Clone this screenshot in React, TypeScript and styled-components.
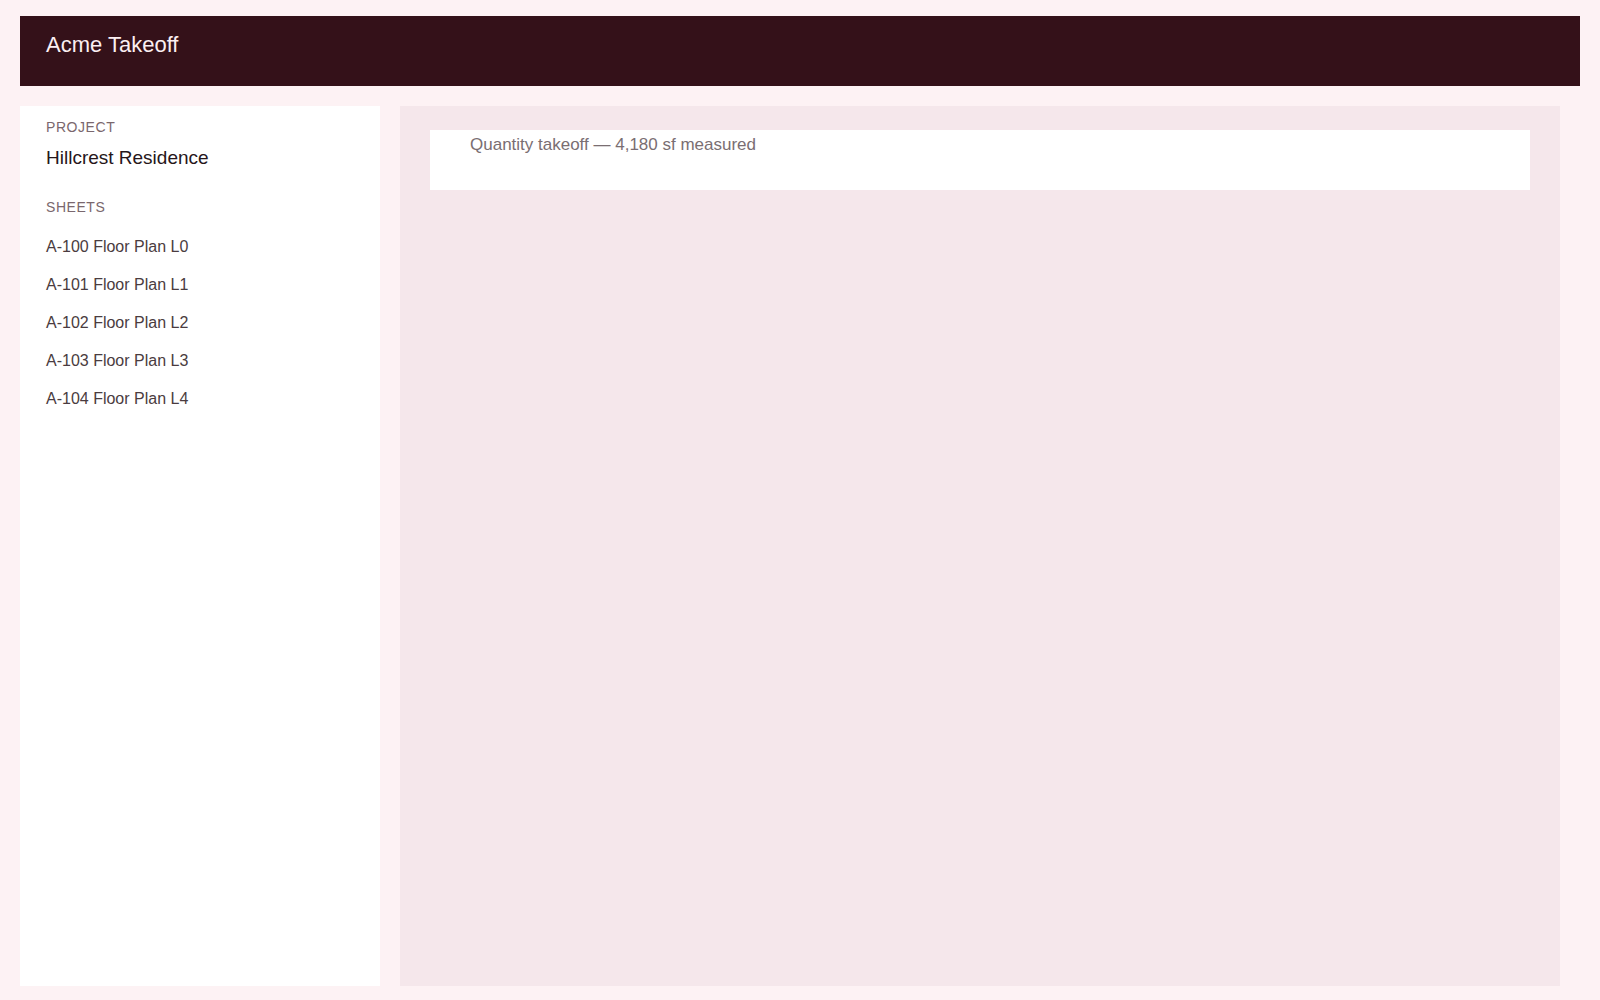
import React from "react";
import styled, { createGlobalStyle } from "styled-components";

const GlobalStyle = createGlobalStyle`
  html, body {
    margin: 0;
    padding: 0;
    background: #fdf2f4;
    font-family: "Liberation Sans", Arial, Helvetica, sans-serif;
  }
  * { box-sizing: border-box; }
`;

const Shell = styled.div`
  height: 1000px;
  padding: 16px 20px 14px 20px;
  display: flex;
  flex-direction: column;
  gap: 20px;
`;

const TopBar = styled.header`
  height: 70px;
  flex: none;
  background: #341119;
  padding: 17px 26px 0 26px;
  color: #fbeff2;
  font-size: 22px;
  line-height: 24px;
`;

const Body = styled.div`
  flex: 1;
  min-height: 0;
  display: flex;
  gap: 20px;
  padding-right: 20px;
`;

const Sidebar = styled.aside`
  width: 360px;
  flex: none;
  background: #ffffff;
  padding: 13px 26px;
  display: flex;
  flex-direction: column;
`;

const Label = styled.div<{ $gap?: number }>`
  font-size: 14px;
  line-height: 16px;
  letter-spacing: 0.04em;
  text-transform: uppercase;
  color: #7a676d;
  margin-top: ${(p) => p.$gap ?? 0}px;
`;

const ProjectName = styled.div`
  margin-top: 12px;
  font-size: 19px;
  line-height: 22px;
  color: #26161a;
`;

const SheetList = styled.ul`
  list-style: none;
  margin: 13px 0 0 0;
  padding: 0;
`;

const SheetItem = styled.li`
  padding: 9px 0;
  font-size: 16px;
  line-height: 20px;
  color: #4a3c40;
`;

const Main = styled.main`
  flex: 1;
  background: #f5e7eb;
  padding: 24px 30px;
`;

const SummaryCard = styled.div`
  height: 60px;
  background: #ffffff;
  padding: 5px 40px 0 40px;
  font-size: 17px;
  line-height: 20px;
  color: #7a6e72;
`;

const sheets = [
  "A-100 Floor Plan L0",
  "A-101 Floor Plan L1",
  "A-102 Floor Plan L2",
  "A-103 Floor Plan L3",
  "A-104 Floor Plan L4",
];

export default function App() {
  return (
    <>
      <GlobalStyle />
      <Shell>
        <TopBar>Acme Takeoff</TopBar>
        <Body>
          <Sidebar>
            <Label>Project</Label>
            <ProjectName>Hillcrest Residence</ProjectName>
            <Label $gap={30}>Sheets</Label>
            <SheetList>
              {sheets.map((s) => (
                <SheetItem key={s}>{s}</SheetItem>
              ))}
            </SheetList>
          </Sidebar>
          <Main>
            <SummaryCard>Quantity takeoff — 4,180 sf measured</SummaryCard>
          </Main>
        </Body>
      </Shell>
    </>
  );
}
